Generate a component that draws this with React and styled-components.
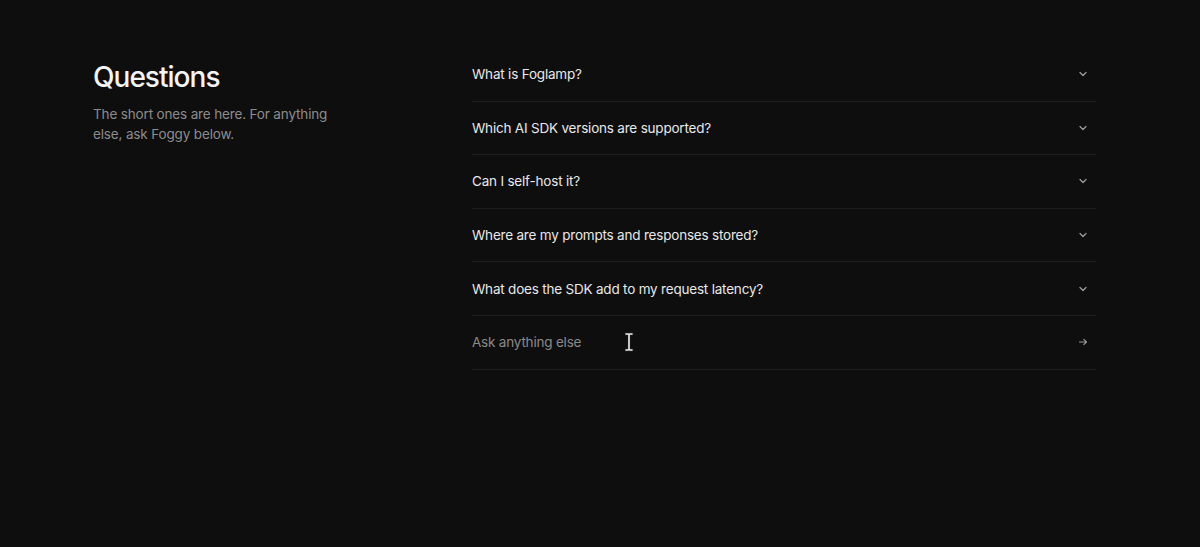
import React from 'react';
import styled, { createGlobalStyle } from 'styled-components';

const GlobalStyle = createGlobalStyle`
  html, body {
    margin: 0;
    padding: 0;
    background: #0e0e0f;
    font-family: Inter, "Noto Sans", "Liberation Sans", sans-serif;
    -webkit-font-smoothing: antialiased;
  }
  * { box-sizing: border-box; }
`;

const Page = styled.main`
  width: 1200px;
  height: 547px;
  padding: 48px 104px 0 93px;
  display: grid;
  grid-template-columns: 379px 1fr;
`;

const Intro = styled.div`
  padding-top: 12px;
`;

const Title = styled.h2`
  margin: 0;
  font-size: 28px;
  line-height: 34px;
  font-weight: 500;
  letter-spacing: -0.035em;
  color: #f4f4f4;
`;

const Lead = styled.p`
  margin: 11px 0 0;
  max-width: 250px;
  font-size: 13.5px;
  line-height: 19.5px;
  letter-spacing: -0.15px;
  color: #8c8c8c;
`;

const List = styled.div`
  display: flex;
  flex-direction: column;
`;

const Row = styled.div`
  position: relative;
  height: 53.6px;
  display: flex;
  align-items: center;
  justify-content: space-between;
  border-bottom: 1px solid #1e1e1f;
  padding-right: 8px;
`;

const Question = styled.span`
  font-size: 13.5px;
  letter-spacing: -0.2px;
  color: ${p => (p.$muted ? '#8a8a8a' : '#e8e8e8')};
`;

const Icon = styled.svg`
  width: 10px;
  height: 10px;
  color: #9a9a9a;
  flex: none;
`;

const Caret = styled.svg`
  position: absolute;
  left: 152px;
  top: 16px;
  width: 10px;
  height: 20px;
`;

const questions = [
  'What is Foglamp?',
  'Which AI SDK versions are supported?',
  'Can I self-host it?',
  'Where are my prompts and responses stored?',
  'What does the SDK add to my request latency?',
];

function Chevron() {
  return (
    <Icon viewBox="0 0 10 10" fill="none">
      <path d="M2 3.5 L5 6.5 L8 3.5" stroke="currentColor" strokeWidth="1.3" strokeLinecap="round" strokeLinejoin="round" />
    </Icon>
  );
}

function Arrow() {
  return (
    <Icon viewBox="0 0 10 10" fill="none">
      <path d="M1.5 5 H8.5 M5.8 2.3 L8.5 5 L5.8 7.7" stroke="currentColor" strokeWidth="1.1" strokeLinecap="round" strokeLinejoin="round" />
    </Icon>
  );
}

const beam = 'M2 2 H4 C4.6 2 5 2.4 5 3 V17 C5 17.6 4.6 18 4 18 H2 M8 2 H6 C5.4 2 5 2.4 5 3 M5 17 C5 17.6 5.4 18 6 18 H8';

export default function App() {
  return (
    <>
      <GlobalStyle />
      <Page>
        <Intro>
          <Title>Questions</Title>
          <Lead>The short ones are here. For anything else, ask Foggy below.</Lead>
        </Intro>
        <List>
          {questions.map(q => (
            <Row key={q}>
              <Question>{q}</Question>
              <Chevron />
            </Row>
          ))}
          <Row>
            <Question $muted>Ask anything else</Question>
            <Caret viewBox="0 0 10 20" fill="none">
              <path d={beam} stroke="#1a1a1a" strokeWidth="3.4" strokeLinecap="round" strokeLinejoin="round" />
              <path d={beam} stroke="#f2f2f2" strokeWidth="1.6" strokeLinecap="round" strokeLinejoin="round" />
            </Caret>
            <Arrow />
          </Row>
        </List>
      </Page>
    </>
  );
}
